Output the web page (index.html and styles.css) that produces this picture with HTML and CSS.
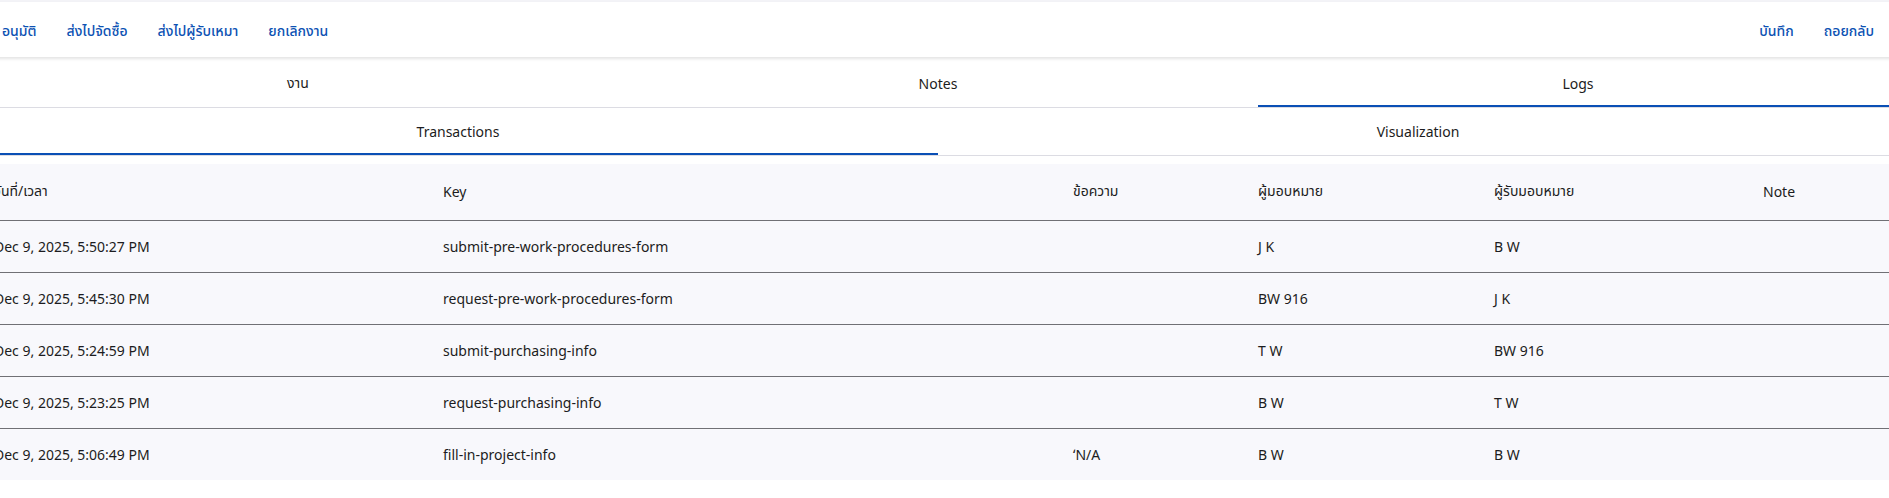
FILE: index.html
```html
<!DOCTYPE html>
<html lang="th">
<head>
<meta charset="utf-8">
<title>Logs</title>
<link rel="stylesheet" href="styles.css">
</head>
<body>
<div class="page">
  <div class="app-strip"></div>
  <div class="toolbar">
    <div class="toolbar-group">
      <button class="tb-btn">อนุมัติ</button>
      <button class="tb-btn">ส่งไปจัดซื้อ</button>
      <button class="tb-btn">ส่งไปผู้รับเหมา</button>
      <button class="tb-btn">ยกเลิกงาน</button>
    </div>
    <div class="toolbar-group">
      <button class="tb-btn">บันทึก</button>
      <button class="tb-btn">ถอยกลับ</button>
    </div>
  </div>
  <div class="tabs tabs-main">
    <div class="tab">งาน</div>
    <div class="tab">Notes</div>
    <div class="tab active">Logs</div>
  </div>
  <div class="tabs tabs-sub">
    <div class="tab active">Transactions</div>
    <div class="tab">Visualization</div>
  </div>
  <table class="log-table">
    <colgroup>
      <col class="c-date"><col class="c-key"><col class="c-msg"><col class="c-from"><col class="c-to"><col class="c-note">
    </colgroup>
    <thead>
      <tr><th>วันที่/เวลา</th><th>Key</th><th>ข้อความ</th><th>ผู้มอบหมาย</th><th>ผู้รับมอบหมาย</th><th>Note</th></tr>
    </thead>
    <tbody>
      <tr><td>Dec 9, 2025, 5:50:27 PM</td><td>submit-pre-work-procedures-form</td><td></td><td>J K</td><td>B W</td><td></td></tr>
      <tr><td>Dec 9, 2025, 5:45:30 PM</td><td>request-pre-work-procedures-form</td><td></td><td>BW 916</td><td>J K</td><td></td></tr>
      <tr><td>Dec 9, 2025, 5:24:59 PM</td><td>submit-purchasing-info</td><td></td><td>T W</td><td>BW 916</td><td></td></tr>
      <tr><td>Dec 9, 2025, 5:23:25 PM</td><td>request-purchasing-info</td><td></td><td>B W</td><td>T W</td><td></td></tr>
      <tr><td>Dec 9, 2025, 5:06:49 PM</td><td>fill-in-project-info</td><td>ʻN/A</td><td>B W</td><td>B W</td><td></td></tr>
    </tbody>
  </table>
</div>
</body>
</html>
```

FILE: styles.css
```css
html, body {
  margin: 0;
  padding: 0;
  background: #ffffff;
  overflow: hidden;
}

body {
  font-family: "Noto Sans", "Noto Sans Thai", "DejaVu Sans", sans-serif;
  font-size: 14px;
  color: #1c1c21;
}

.page {
  width: 1920px;
  margin-left: -22px;
}

.app-strip {
  height: 2px;
  background: #f3f3f7;
}

.toolbar {
  height: 55px;
  box-sizing: border-box;
  padding: 3px 16px 0;
  display: flex;
  align-items: center;
  justify-content: space-between;
  background: #ffffff;
  box-shadow: 0 2px 3px rgba(0, 0, 0, 0.11);
  position: relative;
  z-index: 1;
}

.toolbar-group {
  display: flex;
  gap: 14px;
}

.tb-btn {
  font-family: inherit;
  font-size: 14px;
  font-weight: 500;
  color: #0d52b3;
  background: none;
  border: 0;
  padding: 6px 8px;
  cursor: pointer;
}

.tabs {
  display: flex;
  border-bottom: 1px solid #dcdce3;
}

.tabs-main {
  margin-top: 3px;
}

.tab {
  flex: 1;
  height: 47px;
  box-sizing: border-box;
  display: flex;
  align-items: center;
  justify-content: center;
  font-size: 14px;
  color: #1c1c21;
}

.tab.active {
  border-bottom: 2px solid #0a4fb5;
  padding-top: 2px;
}

.log-table {
  margin-top: 8px;
  width: 1920px;
  border-collapse: collapse;
  table-layout: fixed;
  background: #f8f8fc;
}

.c-date { width: 449px; }
.c-key { width: 630px; }
.c-msg { width: 185px; }
.c-from { width: 236px; }
.c-to { width: 269px; }
.c-note { width: 151px; }

.log-table th,
.log-table td {
  text-align: left;
  padding: 0 16px;
  font-weight: 400;
  font-size: 14px;
  color: #1c1c21;
  white-space: nowrap;
}

.log-table thead tr {
  height: 56px;
  border-bottom: 1px solid #707075;
}

.log-table tbody tr {
  height: 52px;
  border-bottom: 1px solid #707075;
}

.log-table tbody tr:last-child {
  border-bottom: 0;
}
```
